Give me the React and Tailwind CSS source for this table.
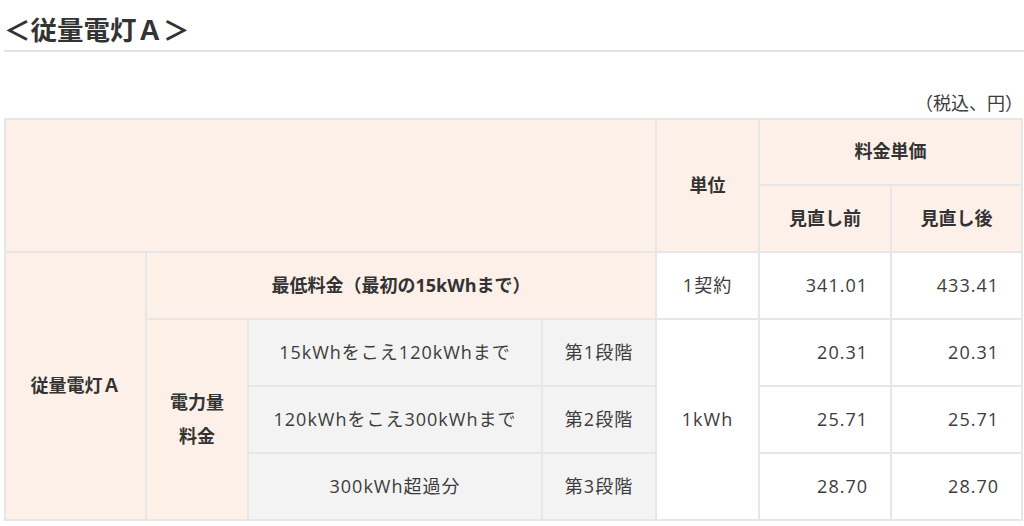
import React from 'react';

const font = { fontFamily: '"Open Sans", "Noto Sans CJK JP", sans-serif' };

const tiers = [
    { range: '15kWhをこえ120kWhまで', step: '第1段階', before: '20.31', after: '20.31' },
    { range: '120kWhをこえ300kWhまで', step: '第2段階', before: '25.71', after: '25.71' },
    { range: '300kWh超過分', step: '第3段階', before: '28.70', after: '28.70' },
];

const App = () => {
    const cell = 'border-2 border-[#e6e6e6]';
    const head = `${cell} bg-[#fdf0e8] font-bold text-[18px] tracking-normal text-center text-[#333]`;

    return (
        <div className="w-[1024px] h-[526px] bg-white text-[#3c3c3c] overflow-hidden" style={font}>
            <div className="pl-[4px]">
                <h2 className="text-[26.5px] font-bold leading-none pt-[17px] pb-[6px] text-[#333]">＜従量電灯Ａ＞</h2>
                <div className="h-[2px] bg-[#e2e2e2]"></div>
            </div>

            <p className="text-right text-[18px] leading-none pr-[1px] pt-[42px] pb-[6px]">（税込、円）</p>

            <div className="pl-[4px] pr-[3px]">
                <table className="w-full border-collapse table-fixed">
                    <colgroup>
                        <col className="w-[141px]" />
                        <col className="w-[102px]" />
                        <col className="w-[294px]" />
                        <col className="w-[114px]" />
                        <col className="w-[103px]" />
                        <col className="w-[132px]" />
                        <col className="w-[131px]" />
                    </colgroup>
                    <thead>
                        <tr className="h-[66px]">
                            <th colSpan={4} rowSpan={2} className={head}></th>
                            <th rowSpan={2} className={head}>単位</th>
                            <th colSpan={2} className={head}>料金単価</th>
                        </tr>
                        <tr className="h-[67px]">
                            <th className={head}>見直し前</th>
                            <th className={head}>見直し後</th>
                        </tr>
                    </thead>
                    <tbody className="text-[18px] tracking-[1px]">
                        <tr className="h-[67px]">
                            <th rowSpan={4} className={head}>従量電灯Ａ</th>
                            <th colSpan={3} className={head}>最低料金（最初の15kWhまで）</th>
                            <td className={`${cell} text-center`}>1契約</td>
                            <td className={`${cell} text-right pr-[22px]`}>341.01</td>
                            <td className={`${cell} text-right pr-[22px]`}>433.41</td>
                        </tr>
                        {tiers.map((t, i) => (
                            <tr key={i} className="h-[67px]">
                                {i === 0 && (
                                    <th rowSpan={3} className={`${head} leading-[34px]`}>
                                        電力量<br />料金
                                    </th>
                                )}
                                <td className={`${cell} bg-[#f3f3f3] text-center`}>{t.range}</td>
                                <td className={`${cell} bg-[#f3f3f3] text-center`}>{t.step}</td>
                                {i === 0 && (
                                    <td rowSpan={3} className={`${cell} text-center`}>1kWh</td>
                                )}
                                <td className={`${cell} text-right pr-[22px]`}>{t.before}</td>
                                <td className={`${cell} text-right pr-[22px]`}>{t.after}</td>
                            </tr>
                        ))}
                    </tbody>
                </table>
            </div>
        </div>
    );
};

export default App;
